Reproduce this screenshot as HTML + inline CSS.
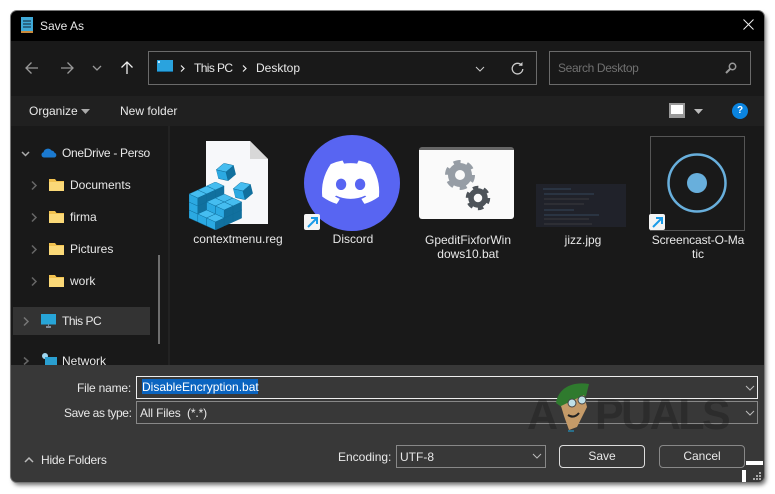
<!DOCTYPE html>
<html><head><meta charset="utf-8"><style>
html,body{margin:0;padding:0;background:#fff}
body{width:775px;height:494px;position:relative;overflow:hidden;font-family:"Liberation Sans",sans-serif;font-size:12px;color:#e8e8e8}
.a{position:absolute}
.t{position:absolute;white-space:nowrap;line-height:16px}
svg{position:absolute;overflow:visible}
.c{text-align:center}
</style></head><body>
<div class="a" style="left:11px;top:11px;width:753px;height:471px;border-radius:6px;background:#383838;box-shadow:0 0 0 1px #777,2px 3px 4px rgba(0,0,0,.55);overflow:hidden">
<div class="a" style="left:0;top:0;width:753px;height:30px;background:#000"></div>
<div class="a" style="left:0;top:30px;width:753px;height:55px;background:#191919"></div>
<div class="a" style="left:0;top:85px;width:753px;height:30px;background:#202020"></div>
<div class="a" style="left:0;top:115px;width:753px;height:239px;background:#191919"></div>
<div class="a" style="left:157px;top:115px;width:2px;height:239px;background:#222"></div>
</div>

<!-- title -->
<svg style="left:21px;top:17px" width="13" height="16"><rect width="12" height="15" fill="#3fa9d8"/><rect y="14" width="12" height="2" fill="#c98a3c"/><path d="M2 4h8M2 7h8M2 10h8" stroke="#123" stroke-width="1"/></svg>
<div class="t" style="left:40px;top:18px">Save As</div>
<svg style="left:743px;top:19px" width="11" height="11"><path d="M.5.5l10 10M10.500.5l-10 10" stroke="#eee" fill="none"/></svg>

<!-- nav -->
<svg style="left:25px;top:61px" width="14" height="14"><path d="M13 7H1M6.500 1.500L1 7l5.500 5.500" stroke="#999" stroke-width="1.300" fill="none"/></svg>
<svg style="left:60px;top:61px" width="14" height="14"><path d="M1 7h12M7.500 1.500L13 7l-5.500 5.500" stroke="#999" stroke-width="1.300" fill="none"/></svg>
<svg style="left:92px;top:65px" width="11" height="6"><path d="M1 1l4 4 4-4" stroke="#999" stroke-width="1.300" fill="none"/></svg>
<svg style="left:120px;top:61px" width="14" height="14"><path d="M7 13V1M1.500 6.500L7 1l5.500 5.500" stroke="#eee" stroke-width="1.300" fill="none"/></svg>
<div class="a" style="left:148px;top:51px;width:387px;height:32px;border:1px solid #6a6a6a"></div>
<svg style="left:157px;top:60px" width="16" height="13"><rect width="16" height="12" fill="#2aa3de"/><rect x="1" y="1" width="2" height="2" fill="#bfeaff"/><rect y="11" width="16" height="1" fill="#146a9a"/></svg>
<svg style="left:180px;top:65px" width="5" height="7"><path d="M1 .5L4 3.500 1 6.500" stroke="#eee" stroke-width="1.200" fill="none"/></svg>
<div class="t" style="left:194px;top:60px;letter-spacing:-.6px">This PC</div>
<svg style="left:242px;top:65px" width="5" height="7"><path d="M1 .5L4 3.500 1 6.500" stroke="#eee" stroke-width="1.200" fill="none"/></svg>
<div class="t" style="left:256px;top:60px">Desktop</div>
<svg style="left:475px;top:66px" width="10" height="6"><path d="M1 1l4 4 4-4" stroke="#ccc" fill="none"/></svg>
<svg style="left:511px;top:62px" width="13" height="13"><path d="M10.800 3.500A5.300 5.300 0 1 0 11.800 7" stroke="#ccc" stroke-width="1.300" fill="none"/><path d="M7.500 3.800h4V0z" fill="#ccc"/></svg>
<div class="a" style="left:549px;top:51px;width:200px;height:32px;border:1px solid #6a6a6a"></div>
<div class="t" style="left:558px;top:60px;color:#707070;letter-spacing:-.35px">Search Desktop</div>
<svg style="left:725px;top:62px" width="12" height="12"><circle cx="7.500" cy="4.500" r="3.200" stroke="#999" stroke-width="1.500" fill="none"/><path d="M5 7l-4 4" stroke="#999" stroke-width="2"/></svg>

<!-- toolbar -->
<div class="t" style="left:29px;top:103px">Organize</div>
<svg style="left:81px;top:109px" width="9" height="5"><path d="M0 0h9L4.500 5z" fill="#aaa"/></svg>
<div class="t" style="left:120px;top:103px">New folder</div>
<div class="a" style="left:669px;top:103px;width:12px;height:9px;background:#fff;border:2px solid #999;border-bottom-width:4px"></div>
<svg style="left:694px;top:109px" width="9" height="5"><path d="M0 0h9L4.500 5z" fill="#bbb"/></svg>
<div class="a" style="left:732px;top:103px;width:16px;height:16px;border-radius:50%;background:#0a84e0;color:#fff;font-weight:bold;font-size:10px;line-height:16px;text-align:center">?</div>

<!-- tree -->
<svg style="left:21px;top:151px" width="9" height="6"><path d="M1 1l3.500 3.500L8 1" stroke="#aaa" stroke-width="1.500" fill="none"/></svg>
<svg style="left:41px;top:147px" width="16" height="11"><path d="M3 10.500a2.700 2.700 0 0 1-.5-5.300A4.500 4.500 0 0 1 10.500 3.500a3.500 3.500 0 0 1 3 2.200 2.500 2.500 0 0 1 0 4.800z" fill="#1b7ad0"/></svg>
<div class="t" style="left:62px;top:145px;letter-spacing:-.3px">OneDrive - Perso</div>

<svg style="left:31px;top:181px" width="6" height="9"><path d="M1 .5l4 4-4 4" stroke="#666" stroke-width="1.500" fill="none"/></svg>
<svg style="left:49px;top:179px" width="15" height="12"><path d="M0 0h6l1.500 2H15v10H0z" fill="#f2c24f"/><rect y="3" width="15" height="9" fill="#fbd978"/></svg>
<div class="t" style="left:70px;top:177px">Documents</div>
<svg style="left:31px;top:213px" width="6" height="9"><path d="M1 .5l4 4-4 4" stroke="#666" stroke-width="1.500" fill="none"/></svg>
<svg style="left:49px;top:211px" width="15" height="12"><path d="M0 0h6l1.500 2H15v10H0z" fill="#f2c24f"/><rect y="3" width="15" height="9" fill="#fbd978"/></svg>
<div class="t" style="left:70px;top:209px">firma</div>
<svg style="left:31px;top:245px" width="6" height="9"><path d="M1 .5l4 4-4 4" stroke="#666" stroke-width="1.500" fill="none"/></svg>
<svg style="left:49px;top:243px" width="15" height="12"><path d="M0 0h6l1.500 2H15v10H0z" fill="#f2c24f"/><rect y="3" width="15" height="9" fill="#fbd978"/></svg>
<div class="t" style="left:70px;top:241px">Pictures</div>
<svg style="left:31px;top:277px" width="6" height="9"><path d="M1 .5l4 4-4 4" stroke="#666" stroke-width="1.500" fill="none"/></svg>
<svg style="left:49px;top:275px" width="15" height="12"><path d="M0 0h6l1.500 2H15v10H0z" fill="#f2c24f"/><rect y="3" width="15" height="9" fill="#fbd978"/></svg>
<div class="t" style="left:70px;top:273px">work</div>

<div class="a" style="left:13px;top:307px;width:137px;height:28px;background:#333"></div>
<svg style="left:23px;top:317px" width="6" height="9"><path d="M1 .5l4 4-4 4" stroke="#777" stroke-width="1.500" fill="none"/></svg>
<svg style="left:41px;top:314px" width="15" height="14"><rect width="15" height="10.500" fill="#27a5d8"/><path d="M5 13h5" stroke="#9ab" stroke-width="1.500"/><path d="M7.500 10v3" stroke="#789"/></svg>
<div class="t" style="left:62px;top:313px;letter-spacing:-.5px">This PC</div>
<div class="a" style="left:158px;top:255px;width:2px;height:89px;background:#6e6e6e"></div>

<svg style="left:23px;top:357px" width="6" height="8"><path d="M1 .5l4 3.500-4 3.500" stroke="#666" stroke-width="1.500" fill="none"/></svg>
<svg style="left:41px;top:353px" width="16" height="12"><circle cx="4" cy="3" r="3" fill="#9fd6ef"/><rect x="4" y="4" width="12" height="8" fill="#2a9fd0"/></svg>
<div class="t" style="left:62px;top:353px">Network</div>
<div class="a" style="left:11px;top:365px;width:753px;height:10px;background:#383838"></div>

<!-- registry file -->
<svg style="left:188px;top:141px" width="82" height="84"><path d="M18 0h44l18 18V83H18z" fill="#f7f8fa"/><path d="M62 0v18h18z" fill="#d8d8d8"/></svg>
<svg style="left:189px;top:180px" width="53" height="50">
<symbol id="q" viewBox="0 0 16 16"><path d="M0 4l8-4 8 4-8 4z" fill="#45bdf0" stroke="#0e6b98" stroke-width=".4"/><path d="M0 4l8 4v8l-8-4z" fill="#2ba9e2" stroke="#0e6b98" stroke-width=".4"/><path d="M8 8l8-4v8l-8 4z" fill="#11709e" stroke="#0e6b98" stroke-width=".4"/></symbol>
<g transform="scale(1.1 1)">
<use href="#q" x="16" y="18" width="16" height="16"/><use href="#q" x="16" y="10" width="16" height="16"/><use href="#q" x="16" y="2" width="16" height="16"/>
<use href="#q" x="24" y="22" width="16" height="16"/><use href="#q" x="24" y="14" width="16" height="16"/>
<use href="#q" x="32" y="26" width="16" height="16"/><use href="#q" x="32" y="18" width="16" height="16"/>
<use href="#q" x="8" y="22" width="16" height="16"/><use href="#q" x="8" y="14" width="16" height="16"/><use href="#q" x="8" y="6" width="16" height="16"/>
<use href="#q" x="16" y="26" width="16" height="16"/><use href="#q" x="16" y="18" width="16" height="16"/>
<use href="#q" x="24" y="30" width="16" height="16"/><use href="#q" x="24" y="22" width="16" height="16"/>
<use href="#q" x="0" y="26" width="16" height="16"/><use href="#q" x="0" y="18" width="16" height="16"/><use href="#q" x="0" y="10" width="16" height="16"/>
<use href="#q" x="8" y="30" width="16" height="16"/>
<use href="#q" x="16" y="34" width="16" height="16"/>
</g></svg>
<svg style="left:217px;top:163px" width="18" height="18"><use href="#q" width="18" height="18" transform="rotate(-14 9 9)"/></svg>
<svg style="left:234px;top:182px" width="18" height="18"><use href="#q" width="18" height="18" transform="rotate(-14 9 9)"/></svg>
<div class="t c" style="left:178px;top:231px;width:120px">contextmenu.reg</div>

<!-- discord -->
<svg style="left:304px;top:135px" width="96" height="96"><circle cx="48" cy="48" r="48" fill="#5865f2"/>
<path transform="translate(18 25.500) scale(.45)" fill="#fff" d="M107.700,8.070A105.150,105.150,0,0,0,81.470,0a72.060,72.060,0,0,0-3.360,6.830A97.680,97.680,0,0,0,49,6.830,72.370,72.370,0,0,0,45.640,0,105.890,105.890,0,0,0,19.390,8.090C2.790,32.650-1.710,56.600.54,80.210h0A105.730,105.730,0,0,0,32.710,96.360,77.700,77.700,0,0,0,39.600,85.250a68.420,68.420,0,0,1-10.850-5.180c.91-.66,1.800-1.340,2.660-2a75.570,75.570,0,0,0,64.320,0c.87.710,1.760,1.390,2.660,2a68.680,68.680,0,0,1-10.870,5.190,77,77,0,0,0,6.890,11.100A105.250,105.250,0,0,0,126.600,80.220h0C129.240,52.840,122.090,29.110,107.700,8.070ZM42.450,65.690C36.180,65.690,31,60,31,53s5-12.740,11.430-12.740S54,46,53.890,53,48.840,65.690,42.450,65.690Zm42.240,0C78.410,65.690,73.250,60,73.250,53s5-12.740,11.440-12.740S96.230,46,96.120,53,91.080,65.690,84.690,65.690Z"/></svg>
<div class="a" style="left:304px;top:214px;width:16px;height:16px;background:#f4f4f4;border-radius:2px"></div>
<svg style="left:304px;top:214px" width="16" height="16"><path d="M4 13L12 5M7 4h6v6" stroke="#1a9be8" stroke-width="2" fill="none"/></svg>
<div class="t c" style="left:293px;top:231px;width:120px">Discord</div>

<!-- gpedit -->
<div class="a" style="left:419px;top:147px;width:95px;height:72px;background:#fafafa;border-radius:3px;border-top:3px solid #666;box-sizing:border-box"></div>
<svg style="left:445px;top:160px" width="46" height="50">
<circle cx="15" cy="15" r="8.500" fill="none" stroke="#969da5" stroke-width="7"/><circle cx="15" cy="15" r="13" fill="none" stroke="#969da5" stroke-width="4" stroke-dasharray="7 6.610"/>
<circle cx="33" cy="38" r="7" fill="none" stroke="#4d5359" stroke-width="5.500"/><circle cx="33" cy="38" r="10.500" fill="none" stroke="#4d5359" stroke-width="3.500" stroke-dasharray="5.500 5.500"/>
</svg>
<div class="t c" style="left:408px;top:232px;width:120px">GpeditFixforWin</div>
<div class="t c" style="left:408px;top:246px;width:120px">dows10.bat</div>

<!-- jizz -->
<div class="a" style="left:536px;top:184px;width:90px;height:43px;background:#20222a"></div>
<svg style="left:541px;top:186px" width="75" height="40" opacity=".65"><path d="M2 3h28M3 8h50M3 24h30M3 29h55" stroke="#4a6b90" stroke-width=".7"/><path d="M3 13h45M3 18h40M3 33h45M3 38h48" stroke="#555" stroke-width=".7"/></svg>
<div class="t c" style="left:523px;top:232px;width:120px">jizz.jpg</div>

<!-- screencast -->
<div class="a" style="left:650px;top:136px;width:93px;height:93px;border:1px solid #555"></div>
<svg style="left:666px;top:152px" width="62" height="62"><circle cx="31" cy="31" r="28.500" stroke="#68afdc" stroke-width="2.500" fill="none"/><circle cx="31" cy="31" r="10" fill="#68afdc"/></svg>
<div class="a" style="left:649px;top:214px;width:16px;height:16px;background:#f4f4f4;border-radius:2px"></div>
<svg style="left:649px;top:214px" width="16" height="16"><path d="M4 13L12 5M7 4h6v6" stroke="#1a9be8" stroke-width="2" fill="none"/></svg>
<div class="t c" style="left:638px;top:232px;width:120px;letter-spacing:-.1px">Screencast-O-Ma</div>
<div class="t c" style="left:638px;top:246px;width:120px">tic</div>

<!-- bottom -->
<div class="t" style="left:77px;top:380px;letter-spacing:-.2px">File name:</div>
<div class="a" style="left:136px;top:376px;width:620px;height:21px;border:1px solid #eee"></div>
<div class="a" style="left:142px;top:379px;width:116px;height:15px;background:#0a64c0"></div>
<div class="t" style="left:142px;top:379px;color:#fff">DisableEncryption.bat</div>
<svg style="left:745px;top:385px" width="10" height="6"><path d="M1 1l4 4 4-4" stroke="#bbb" fill="none"/></svg>
<div class="t" style="left:64px;top:405px;letter-spacing:-.4px">Save as type:</div>
<div class="a" style="left:136px;top:401px;width:620px;height:21px;border:1px solid #888"></div>
<div class="t" style="left:140px;top:405px;letter-spacing:-.15px">All Files&nbsp; (*.*)</div>
<svg style="left:745px;top:410px" width="10" height="6"><path d="M1 1l4 4 4-4" stroke="#bbb" fill="none"/></svg>

<svg style="left:24px;top:457px" width="10" height="6"><path d="M1 5l4-4 4 4" stroke="#bbb" stroke-width="1.500" fill="none"/></svg>
<div class="t" style="left:41px;top:452px;letter-spacing:-.2px">Hide Folders</div>
<div class="t" style="left:338px;top:449px">Encoding:</div>
<div class="a" style="left:396px;top:445px;width:148px;height:21px;border:1px solid #888"></div>
<div class="t" style="left:400px;top:449px">UTF-8</div>
<svg style="left:532px;top:453px" width="10" height="6"><path d="M1 1l4 4 4-4" stroke="#bbb" fill="none"/></svg>
<div class="a c" style="left:559px;top:445px;width:84px;height:21px;border:1px solid #ddd;border-radius:4px;line-height:21px">Save</div>
<div class="a c" style="left:659px;top:445px;width:84px;height:21px;border:1px solid #888;border-radius:4px;line-height:21px">Cancel</div>
<div class="a" style="left:746px;top:461px;width:17px;height:4px;background:#fff"></div>
<div class="a" style="left:742px;top:470px;width:4px;height:12px;background:#fff"></div>
<svg style="left:752px;top:471px" width="10" height="10"><path d="M7 1h2v2H7zM4 4h2v2H4zM7 4h2v2H7zM1 7h2v2H1zM4 7h2v2H4zM7 7h2v2H7z" fill="#aaa"/></svg>

<!-- watermark -->
<div class="t" style="left:527px;top:394px;font:bold 43px/43px 'Liberation Sans',sans-serif;color:rgba(15,15,15,.3)">A</div>
<div class="t" style="left:595px;top:394px;font:bold 43px/43px 'Liberation Sans',sans-serif;color:rgba(15,15,15,.3);letter-spacing:-2.500px">PUALS</div>
<svg style="left:555px;top:381px" width="36" height="52"><path d="M1 22C3 8 16 0 34 3l-3 12L8 27z" fill="#2f7a2e"/><path d="M6 25l23-11 3 12-10 20-8 3-5-14z" fill="#c49a68"/><circle cx="17" cy="22" r="4" fill="#bfe0e8" stroke="#444"/><circle cx="27" cy="19" r="4" fill="#bfe0e8" stroke="#444"/><path d="M13 34q6 4 11-2" stroke="#222" stroke-width="2" fill="none"/><path d="M13 50h6" stroke="#2a6f8a" stroke-width="2"/></svg>
</body></html>
